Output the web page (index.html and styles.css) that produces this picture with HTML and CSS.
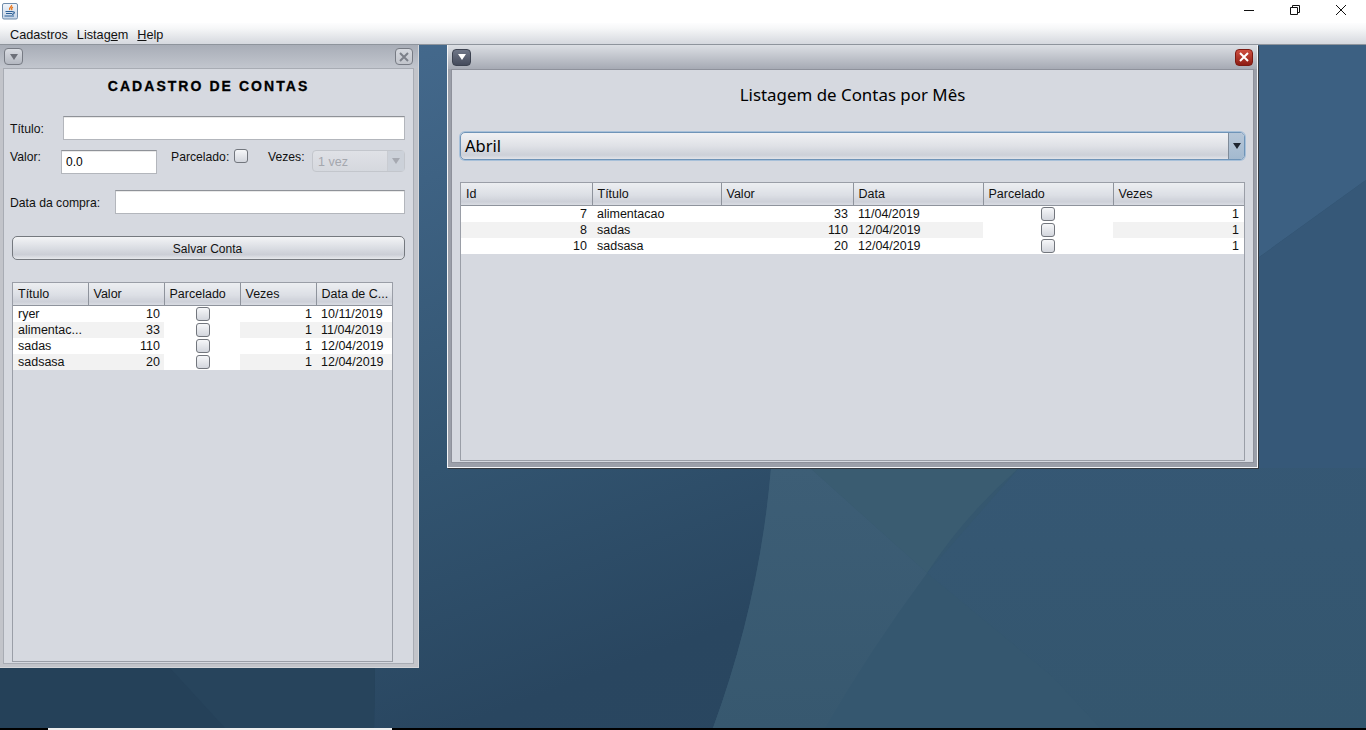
FILE: index.html
```html
<!doctype html>
<html>

<head>
	<meta charset="utf-8">
	<link rel="stylesheet" href="styles.css">
	<title>Contas</title>
</head>

<body>
	<div class="app">
		<div class="titlebar">
			<svg class="appIcon" width="17" height="17" viewBox="0 0 17 17">
				<defs>
					<linearGradient id="iconBg" x1="0" y1="0" x2="0" y2="1">
						<stop offset="0" stop-color="#f2f6fb" />
						<stop offset="1" stop-color="#c3d3e6" />
					</linearGradient>
				</defs>
				<rect x="0.5" y="0.5" width="15" height="15.5" rx="1.5" fill="url(#iconBg)" stroke="#6f8cab" />
				<path d="M9.500 2c1 1.800-3 2.500-1.800 5M11 4.200c-1.800.8-1.800 1.800-.8 2.800" fill="none" stroke="#e8761c" stroke-width="1.300" />
				<path d="M3.500 8.500h7M4 10.500h6M10.500 8.800c2.500-.5 2.500 2.200-.5 2.500M2.500 13h9.500" fill="none" stroke="#2b5f96" stroke-width="1.200" />
			</svg>
			<div class="winButtons">
				<svg width="12" height="12" viewBox="0 0 12 12"><path d="M1 6.500h10" stroke="#111" fill="none" /></svg>
				<svg width="12" height="12" viewBox="0 0 12 12"><path d="M1.500 3.500h7v7h-7zM3.500 3.500v-2h7v7h-2" stroke="#111" fill="none" /></svg>
				<svg width="12" height="12" viewBox="0 0 12 12"><path d="M1 1l10 10M11 1L1 11" stroke="#111" fill="none" /></svg>
			</div>
		</div>

		<div class="menubar">
			<span>Cadastros</span>
			<span>Listag<u>e</u>m</span>
			<span><u>H</u>elp</span>
		</div>

		<div class="desktop">
			<svg class="wallpaper" width="1366" height="683" viewBox="0 45 1366 683">
				<defs>
					<linearGradient id="wallBase" x1="0" y1="0" x2="0.75" y2="1">
						<stop offset="0" stop-color="#4a7096" />
						<stop offset="0.55" stop-color="#325470" />
						<stop offset="0.8" stop-color="#294660" />
						<stop offset="1" stop-color="#2a4760" />
					</linearGradient>
					<linearGradient id="wallRight" x1="0" y1="0" x2="0" y2="1">
						<stop offset="0" stop-color="#37597a" />
						<stop offset="1" stop-color="#34566e" />
					</linearGradient>
					<linearGradient id="wallBlade" x1="0" y1="0" x2="0" y2="1">
						<stop offset="0" stop-color="#3d5e76" />
						<stop offset="1" stop-color="#37586f" />
					</linearGradient>
				</defs>
				<rect x="0" y="45" width="1366" height="683" fill="url(#wallBase)" />
				<path d="M0 668H375L374 728H0z" fill="#254159" />
				<path d="M170 668L225 728H374L375 668z" fill="#27445c" />
				<path d="M1019 468L1366 180V728H713z" fill="url(#wallRight)" />
				<path d="M1258 45H1366V180L1258 258z" fill="#3c6082" />
				<path d="M1258 258L1366 180V468H1258z" fill="#365878" />
				<path d="M771 468H1019L927 573L1053 677L1100 728H713Q760 600 771 468z" fill="#35576f" />
				<path d="M810 468H1019Q965 515 927 573z" fill="#3a5c71" />
				<path d="M771 468H810L927 573Q870 650 825 728H713Q760 600 771 468z" fill="url(#wallBlade)" />
			</svg>

			<div class="win winLeft">
				<div class="winTitle">
					<span class="winBtn"><span class="arrow"></span></span>
					<span class="winBtn close">
						<svg width="12" height="12" viewBox="0 0 12 12"><path d="M2 2l8 8M10 2l-8 8" stroke="#7c8089" stroke-width="2" fill="none" /></svg>
					</span>
				</div>
				<div class="winBody">
					<h1 class="heading">CADASTRO DE CONTAS</h1>
					<div class="row rowTitulo">
						<label class="lblTitulo">Título:</label>
						<div class="field"></div>
					</div>
					<div class="row rowValor">
						<label class="lblValor">Valor:</label>
						<div class="field fieldValor">0.0</div>
						<label class="lblParcelado">Parcelado:</label>
						<span class="check"></span>
						<label class="lblVezes">Vezes:</label>
						<div class="combo">
							<span class="comboText">1 vez</span>
							<span class="comboBtn"><span class="arrow"></span></span>
						</div>
					</div>
					<div class="row rowData">
						<label class="lblData">Data da compra:</label>
						<div class="field"></div>
					</div>
					<div class="saveBtn">Salvar Conta</div>
					<div class="grid gridLeft">
						<table>
							<colgroup>
								<col class="c75"><col class="c76"><col class="c76"><col class="c76"><col class="c76">
							</colgroup>
							<tr><th>Título</th><th>Valor</th><th>Parcelado</th><th>Vezes</th><th>Data de C...</th></tr>
							<tr><td>ryer</td><td class="num">10</td><td class="bool"><span class="check"></span></td><td class="num">1</td><td>10/11/2019</td></tr>
							<tr><td>alimentac...</td><td class="num">33</td><td class="bool"><span class="check"></span></td><td class="num">1</td><td>11/04/2019</td></tr>
							<tr><td>sadas</td><td class="num">110</td><td class="bool"><span class="check"></span></td><td class="num">1</td><td>12/04/2019</td></tr>
							<tr><td>sadsasa</td><td class="num">20</td><td class="bool"><span class="check"></span></td><td class="num">1</td><td>12/04/2019</td></tr>
						</table>
					</div>
				</div>
			</div>

			<div class="win winRight">
				<div class="winTitle">
					<span class="winBtn active"><span class="arrow"></span></span>
					<span class="winBtn closeRed">
						<svg width="12" height="12" viewBox="0 0 12 12"><path d="M2 2l8 8M10 2l-8 8" stroke="#fff" stroke-width="2" fill="none" /></svg>
					</span>
				</div>
				<div class="winBody">
					<h2 class="listTitle">Listagem de Contas por Mês</h2>
					<div class="monthCombo">
						<span class="monthText">Abril</span>
						<span class="monthBtn"><span class="arrow"></span></span>
					</div>
					<div class="grid gridRight">
						<table>
							<colgroup>
								<col class="c131"><col class="c129"><col class="c132"><col class="c130"><col class="c130"><col class="c131">
							</colgroup>
							<tr><th>Id</th><th>Título</th><th>Valor</th><th>Data</th><th>Parcelado</th><th>Vezes</th></tr>
							<tr><td class="num">7</td><td>alimentacao</td><td class="num">33</td><td>11/04/2019</td><td class="bool"><span class="check"></span></td><td class="num">1</td></tr>
							<tr><td class="num">8</td><td>sadas</td><td class="num">110</td><td>12/04/2019</td><td class="bool"><span class="check"></span></td><td class="num">1</td></tr>
							<tr><td class="num">10</td><td>sadsasa</td><td class="num">20</td><td>12/04/2019</td><td class="bool"><span class="check"></span></td><td class="num">1</td></tr>
						</table>
					</div>
				</div>
			</div>
		</div>

		<div class="taskbar"><div class="taskItem"></div></div>
	</div>
</body>

</html>
```

FILE: styles.css
```css
html, body {
	margin: 0;
	padding: 0;
	height: 730px;
	overflow: hidden;
	background: #000;
}

body {
	font-family: "Liberation Sans", Arial, sans-serif;
	font-size: 12.500px;
	color: #111;
}

.app {
	display: flex;
	flex-direction: column;
	height: 730px;
}

/* window chrome */
.titlebar {
	height: 23px;
	background: #fff;
	display: flex;
	align-items: flex-start;
	justify-content: space-between;
}

.appIcon {
	margin: 3px 0 0 2px;
}

.winButtons {
	display: flex;
	gap: 34px;
	margin: 4px 19px 0 0;
}

.menubar {
	height: 22px;
	box-sizing: border-box;
	border-bottom: 1px solid #8e949c;
	background: linear-gradient(#fdfdfe, #f6f7f8 25%, #d5d8de);
	display: flex;
	align-items: center;
	gap: 9px;
	padding: 3px 0 0 10px;
	font-size: 12.700px;
}

.desktop {
	flex: 1;
	position: relative;
	overflow: hidden;
}

.wallpaper {
	position: absolute;
	top: 0;
	left: 0;
}

.taskbar {
	height: 2px;
	background: #000;
}

.taskItem {
	width: 344px;
	height: 2px;
	margin-left: 48px;
	background: #eeeeee;
}

/* internal frames */
.win {
	position: absolute;
	top: 0;
	box-sizing: border-box;
	display: flex;
	flex-direction: column;
}

.winLeft {
	left: 0;
	width: 419px;
	height: 623px;
	padding: 0 4px 3px 3px;
	background: #c2c4ca;
	border-right: 1px solid #d4d6da;
	border-bottom: 1px solid #d4d6da;
}

.winRight {
	left: 447px;
	width: 811px;
	height: 423px;
	padding: 0 3px 4px 3px;
	background: #9b9fa9;
	border: 1px solid #f4f5f7;
	border-top: 0;
	box-shadow: 1px 1px 0 #33383f;
}

.winTitle {
	height: 23px;
	flex: none;
	display: flex;
	align-items: center;
	justify-content: space-between;
	margin: 0 -4px 0 -3px;
	padding: 0 5px 0 4px;
	background: linear-gradient(#a8adb7, #c2c6ce);
}

.winRight .winTitle {
	height: 24px;
	margin: 0 -3px;
	padding: 0 4px;
	background: linear-gradient(#dcdfe4, #a6aab4);
}

.winBody {
	flex: 1;
	box-sizing: border-box;
	display: flex;
	flex-direction: column;
	min-height: 0;
	background: #d6d9e0;
	border: 1px solid #a8acb4;
	padding: 0 8px 1px 6px;
}

.winRight .winBody {
	border-color: #8e919b;
	padding: 0 8px 1px 8px;
}

.winBtn {
	width: 19px;
	height: 17px;
	box-sizing: border-box;
	border: 1px solid #777b84;
	border-radius: 4px;
	background: linear-gradient(#d9dce2, #b4b8c1);
	display: flex;
	align-items: center;
	justify-content: center;
}

.winBtn.close {
	width: 18px;
	background: linear-gradient(#d5d8de, #c2c5cc);
}

.winBtn.active {
	background: linear-gradient(#6f7687, #454b5c);
	border-color: #3c4250;
}

.winBtn.closeRed {
	width: 18px;
	background: linear-gradient(#cf4f40, #8e1c13);
	border-color: #7c1a12;
}

.arrow {
	display: block;
	width: 0;
	height: 0;
	border-left: 4px solid transparent;
	border-right: 4px solid transparent;
	border-top: 6px solid #6d7079;
}

.winBtn.active .arrow {
	border-top-color: #fff;
}

/* cadastro form */
.heading {
	margin: 8px 0 0 0;
	padding-left: 2px;
	height: 18px;
	line-height: 18px;
	flex: none;
	text-align: center;
	font-size: 14px;
	font-weight: bold;
	letter-spacing: 2.050px;
	-webkit-text-stroke: 0.3px #000;
	color: #000;
}

.row {
	display: flex;
	height: 24px;
	flex: none;
}

.row label {
	flex: none;
	font-size: 12.200px;
}

.rowTitulo {
	margin-top: 21px;
	align-items: center;
}

.rowValor {
	margin-top: 10px;
	align-items: flex-start;
}

.rowData {
	margin-top: 16px;
	align-items: center;
}

.lblTitulo {
	width: 53px;
	padding-top: 1px;
}

.lblValor {
	width: 51px;
}

.lblParcelado {
	margin-left: 14px;
	width: 63px;
}

.lblVezes {
	margin-left: 20px;
	width: 44px;
}

.lblData {
	width: 105px;
	padding-top: 2px;
}

.field {
	flex: 1;
	height: 24px;
	box-sizing: border-box;
	background: #fff;
	border: 1px solid #b3b6bc;
	border-top-color: #8f9298;
	box-shadow: inset 0 1px 0 #e9e9e9;
	font-size: 12px;
	line-height: 23px;
	padding-left: 4px;
	color: #000;
}

.fieldValor {
	flex: none;
	width: 96px;
}

.check {
	display: inline-block;
	width: 14px;
	height: 14px;
	box-sizing: border-box;
	border: 1px solid #72767d;
	border-radius: 3px;
	background: linear-gradient(#f6f7f9, #d3d6dd);
}

.rowValor .check {
	margin-top: -1px;
}

.combo {
	width: 93px;
	height: 22px;
	box-sizing: border-box;
	border: 1px solid #c3c6cc;
	border-radius: 4px;
	background: linear-gradient(#dfe1e6, #d5d8de);
	display: flex;
	align-items: center;
	color: #a4a7ae;
}

.comboText {
	flex: 1;
	padding: 1px 0 0 5px;
}

.comboBtn {
	width: 16px;
	height: 20px;
	border-left: 1px solid #c9ccd2;
	background: #ccd1d9;
	display: flex;
	align-items: center;
	justify-content: center;
}

.comboBtn .arrow {
	border-top-color: #a6a9b1;
}

.saveBtn {
	flex: none;
	margin: 22px 0 0 2px;
	padding-right: 2px;
	height: 24px;
	box-sizing: border-box;
	border: 1px solid #75797f;
	border-radius: 5px;
	background: linear-gradient(#f3f4f6, #d8dbe1 55%, #cbced6 80%, #e6e8ec);
	text-align: center;
	line-height: 24px;
	font-size: 12px;
}

/* tables */
.grid {
	flex: 1;
	box-sizing: border-box;
	border: 1px solid #9a9ea7;
	min-height: 0;
	background: #d6d9e0;
}

.gridLeft {
	margin: 22px 12px 0 2px;
}

.gridRight {
	margin-top: 22px;
}

table {
	border-collapse: collapse;
	table-layout: fixed;
	width: 100%;
}

.c75 { width: 75px; }
.c76 { width: 76px; }
.c129 { width: 129px; }
.c130 { width: 130px; }
.c131 { width: 131px; }
.c132 { width: 132px; }

th {
	height: 22px;
	box-sizing: border-box;
	padding: 0 0 0 5px;
	font-weight: normal;
	text-align: left;
	background: linear-gradient(#eceef1, #dcdfe5 55%, #cdd0d8 85%, #d9dce2);
	border-right: 1px solid #8e939c;
	border-bottom: 1px solid #8e939c;
	overflow: hidden;
	white-space: nowrap;
}

th:last-child {
	border-right: 0;
}

td {
	height: 16px;
	padding: 0 0 0 5px;
	background: #fff;
	line-height: 16px;
	white-space: nowrap;
	overflow: hidden;
}

tr:nth-child(odd) td {
	background: #f2f2f2;
}

tr:nth-child(odd) td.bool {
	background: #fff;
}

td.num {
	text-align: right;
	padding: 0 4px 0 0;
}

.gridRight td.num {
	padding-right: 5px;
}

td.bool {
	padding: 0;
	text-align: center;
	line-height: 0;
}

.gridLeft td.bool {
	padding-left: 2px;
}

td.bool .check {
	vertical-align: top;
	margin-top: 1px;
}

/* listagem window */
.listTitle {
	margin: 14px 0 0 0;
	height: 22px;
	line-height: 22px;
	flex: none;
	text-align: center;
	font-family: "Noto Sans", sans-serif;
	font-size: 16.900px;
	font-weight: normal;
	color: #000;
}

.monthCombo {
	flex: none;
	margin-top: 26px;
	height: 28px;
	box-sizing: border-box;
	border: 1px solid #6f94b8;
	border-radius: 5px;
	box-shadow: 0 0 0 1px #a7c0d9;
	background: linear-gradient(#f0f1f4, #dfe1e6 50%, #ccd0d8 85%, #e1e3e8);
	display: flex;
	align-items: center;
}

.monthText {
	flex: 1;
	padding: 0 0 2px 4px;
	font-family: "Noto Sans", sans-serif;
	font-size: 16.500px;
	color: #000;
}

.monthBtn {
	width: 16px;
	height: 26px;
	box-sizing: border-box;
	border-left: 1px solid #7f8b99;
	border-radius: 0 4px 4px 0;
	background: linear-gradient(#b6c6d8, #a3b9cf);
	display: flex;
	align-items: center;
	justify-content: center;
}

.monthBtn .arrow {
	border-top-color: #1d2530;
}
```
